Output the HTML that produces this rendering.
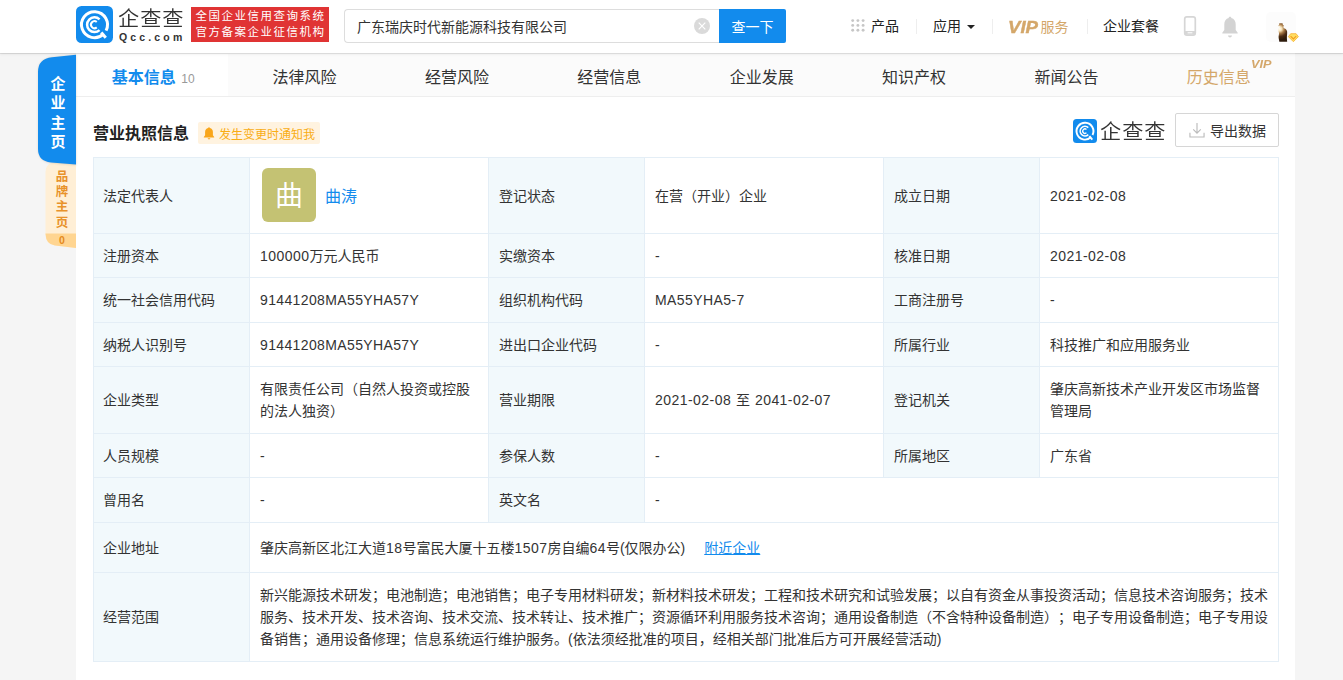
<!DOCTYPE html>
<html lang="zh-CN">
<head>
<meta charset="utf-8">
<title>广东瑞庆时代新能源科技有限公司 - 企查查</title>
<style>
*{box-sizing:border-box;margin:0;padding:0}
html,body{width:1343px;height:680px;overflow:hidden}
body{text-spacing-trim:space-all;background:#f5f5f5;font-family:"Liberation Sans","Noto Sans CJK SC",sans-serif;font-size:14px;color:#333;position:relative}
a{text-decoration:none;color:#128bed}
.abs{position:absolute}
/* header */
#hd{position:absolute;left:0;top:0;width:1343px;height:53px;background:#fff;box-shadow:0 1px 0 rgba(0,0,0,.09),0 1px 3px rgba(0,0,0,.09);z-index:5}
#logo-ic{position:absolute;left:76px;top:6px;width:37px;height:37px}
#logo-cn{position:absolute;left:118.400px;top:4px;font-family:"Noto Sans CJK SC",sans-serif;font-weight:350;font-size:20px;line-height:28px;color:#333;letter-spacing:.9px;white-space:nowrap;transform:scaleX(1.06);transform-origin:0 50%}
#logo-en{position:absolute;left:119px;top:30px;font-family:"Liberation Sans",sans-serif;font-weight:bold;font-size:10.500px;line-height:14px;color:#333;letter-spacing:3.150px;white-space:nowrap}
#redbox{position:absolute;left:191px;top:7px;width:138px;height:35px;background:#e03434;color:#fff;font-size:11.500px;line-height:16.400px;padding:1px 0 0 4.500px;letter-spacing:1.500px;white-space:nowrap}
#search{position:absolute;left:344px;top:9px;width:376px;height:34px;border:1px solid #ddd;border-right:none;border-radius:4px 0 0 4px;background:#fff}
#search span{position:absolute;left:12px;top:1px;line-height:32px;font-size:14px;color:#333;white-space:nowrap}
#clear{position:absolute;left:694px;top:18px;width:16px;height:16px}
#sbtn{position:absolute;left:719px;top:9px;width:67px;height:34px;background:#128bed;color:#fff;font-size:14px;line-height:36px;text-align:center;border-radius:0 2px 2px 0}
.nav{position:absolute;top:15px;line-height:22px;font-size:14px;color:#222;white-space:nowrap}
.sep{position:absolute;top:19px;width:1px;height:15px;background:#eee}
/* main */
#main{position:absolute;left:76px;top:53px;width:1219px;height:627px;background:#fff}
#tabs{position:absolute;left:0;top:1px;width:1219px;height:43px;background:#fbfbfb;border-bottom:1px solid #eee;display:flex}
#tabs div{flex:1;text-align:center;font-size:16px;line-height:42px;padding-top:3px;color:#333;position:relative;white-space:nowrap}
#tabs div.on{background:#fff;color:#128bed;font-weight:bold;text-indent:2px}
#tabs div.on small{font-weight:normal;font-size:12px;color:#999;margin-left:1px}
#tabs div.vip{color:#d4a76a}
#tabs div.vip i{position:absolute;left:108px;top:-11.500px;font-size:11px;transform:scaleX(1.15);transform-origin:0 50%;font-weight:bold;font-style:italic;font-family:"Liberation Sans",sans-serif}
/* side */
#side1{position:absolute;left:36px;top:53px;width:42px;height:114px;z-index:2}
#side2{position:absolute;left:43px;top:160px;width:35px;height:90px}
.sidetxt{z-index:3;position:absolute;text-align:center;font-weight:bold;white-space:nowrap}
/* section */
#ttl{position:absolute;left:17px;top:69px;font-size:16px;font-weight:bold;line-height:24px;color:#222}
#badge{position:absolute;left:122px;top:69px;width:122px;height:22px;background:#fff3e0;border-radius:2px;color:#f9ad14;font-size:12px;line-height:22px;white-space:nowrap}
#badge span{position:absolute;left:21px;top:1.500px}
#badge svg{position:absolute;left:5px;top:5px}
#wm-ic{position:absolute;left:997px;top:66px;width:24px;height:24px}
#wm-tx{position:absolute;left:1024.400px;top:63px;font-family:"Noto Sans CJK SC",sans-serif;font-weight:350;font-size:20px;letter-spacing:.9px;line-height:30px;transform:scaleX(1.06);transform-origin:0 50%;color:#333;white-space:nowrap}
#exp{position:absolute;left:1099px;top:60px;width:104px;height:34px;border:1px solid #d6d6d6;border-radius:2px;background:#fff;font-size:14px;line-height:32px;color:#333}
#exp span{position:absolute;left:34px;top:1px;white-space:nowrap}
#exp svg{position:absolute;left:13px;top:7.500px}
/* table */
table{position:absolute;left:17px;top:104px;width:1185px;border-collapse:collapse;table-layout:fixed;font-size:14px;line-height:22px;color:#333}
td{border:1px solid #e4eef6;padding:0 10px;vertical-align:middle;background:#fff;overflow:hidden}
td.l{background:#f2f9fc}
td.l:first-child{padding-left:9px}
.n{letter-spacing:.45px}
.av{display:inline-block;width:54px;height:54px;border-radius:6px;background:#c4c273;color:#fff;font-size:28px;line-height:57px;text-align:center;vertical-align:middle;margin-left:2px;position:relative;top:-1px}
.nm{font-size:16px;vertical-align:middle;margin-left:9px;position:relative;top:1px}
</style>
</head>
<body>
<div id="hd">
  <svg id="logo-ic" viewBox="0 0 37 37"><rect width="37" height="37" rx="5.500" fill="#128bed"/><g fill="none" stroke="#fff"><path d="M27.37 28.21A13 13 0 1 1 30.08 24.60" stroke-width="3"/><path d="M23.55 24.11A7.400 7.400 0 1 1 23.55 13.29" stroke-width="2.500"/><path d="M20.75 21.38A3.500 3.500 0 1 1 20.75 16.02" stroke-width="2"/><path d="M25.26 26.47L29.78 31.68" stroke-width="3"/></g></svg>
  <div id="logo-cn">企查查</div>
  <div id="logo-en">Qcc.com</div>
  <div id="redbox">全国企业信用查询系统<br>官方备案企业征信机构</div>
  <div id="search"><span>广东瑞庆时代新能源科技有限公司</span></div>
  <svg id="clear" viewBox="0 0 16 16"><circle cx="8" cy="8" r="8" fill="#dadada"/><path d="M4.700 4.700l6.600 6.600M11.300 4.700l-6.600 6.600" stroke="#fff" stroke-width="1.200"/></svg>
  <div id="sbtn">查一下</div>
  <svg class="abs" style="left:851px;top:19px" width="14" height="13" viewBox="0 0 14 13"><g fill="#c6c6c6"><circle cx="1.7" cy="1.6" r="1.450"/><circle cx="6.9" cy="1.6" r="1.450"/><circle cx="12.1" cy="1.6" r="1.450"/><circle cx="1.7" cy="6.4" r="1.450"/><circle cx="6.9" cy="6.4" r="1.450"/><circle cx="12.1" cy="6.4" r="1.450"/><circle cx="1.7" cy="11.2" r="1.450"/><circle cx="6.9" cy="11.2" r="1.450"/><circle cx="12.1" cy="11.2" r="1.450"/></g></svg>
  <div class="nav" style="left:871px">产品</div>
  <div class="sep" style="left:916px"></div>
  <div class="nav" style="left:933px">应用</div>
  <svg class="abs" style="left:967px;top:25px" width="8" height="4" viewBox="0 0 8 4"><path d="M0 0h8L4 4z" fill="#222"/></svg>
  <div class="sep" style="left:992px"></div>
  <div class="nav" style="left:1008px;top:16px;color:#d4a76a"><b style="display:inline-block;font-family:'Liberation Sans',sans-serif;font-style:italic;font-size:16.500px;-webkit-text-stroke:.4px #d4a76a;transform:scaleX(1.13);transform-origin:0 50%;vertical-align:-1px">VIP</b><span style="margin-left:6px">服务</span></div>
  <div class="sep" style="left:1087px"></div>
  <div class="nav" style="left:1103px">企业套餐</div>
  <svg class="abs" style="left:1183px;top:16px" width="14" height="20" viewBox="0 0 14 20"><rect x="1.700" y=".9" width="10.600" height="18.200" rx="2.200" fill="none" stroke="#d6d6d6" stroke-width="1.700"/><rect x="1.700" y="15" width="10.600" height="3.600" fill="#d6d6d6"/><rect x="4.600" y="16.300" width="4.800" height="1" fill="#fff"/></svg>
  <svg class="abs" style="left:1221px;top:15.500px" width="18" height="23" viewBox="0 0 18 22" preserveAspectRatio="none"><path d="M9 .8c.8 0 1.3.5 1.3 1.2 2.8.7 4.4 3 4.4 6v5.4l2 2.6v.8H1.300v-.8l2-2.600V8c0-3 1.600-5.300 4.400-6C7.700 1.300 8.200.8 9 .8z" fill="#d3d3d3"/><path d="M7 18.700h4c0 1.100-.9 1.800-2 1.800s-2-.7-2-1.800z" fill="#d3d3d3"/></svg>
  <div class="abs" style="left:1266px;top:12px;width:30px;height:30px;border-radius:5px;background:#fcfcfc"></div>
  <svg class="abs" style="left:1274px;top:22px" width="26" height="21" viewBox="0 0 26 21"><defs><filter id="fb" x="-30%" y="-30%" width="160%" height="160%"><feGaussianBlur stdDeviation=".45"/></filter><radialGradient id="fg" gradientUnits="userSpaceOnUse" cx="5.600" cy="6.800" r="11"><stop offset="0" stop-color="#fffef8"/><stop offset=".2" stop-color="#f6e2b8"/><stop offset=".42" stop-color="#a87a47"/><stop offset=".7" stop-color="#4e2e14"/><stop offset="1" stop-color="#2e1b0b"/></radialGradient><clipPath id="fc"><rect x="0" y="0" width="26" height="19.700"/></clipPath></defs><g clip-path="url(#fc)"><path filter="url(#fb)" d="M5.300 1.200h3.200l.5 2 1 .3v.8H9.200c.1.900.3 1.500.9 1.900 1.700.7 2.800 1.600 3 3.300.2 2-.1 3.600-.2 5.300-.1 1.700.2 3.300.3 5.700H5.400c-.1-2-.7-3.400-.8-5.200-.1-1.600.5-2.600.4-4.100-.1-1.300-.6-2-.6-3.300 0-1.200.5-2 1.300-2.600.2-.4.200-.7.100-1H4.200v-.8l.8-.3z" fill="url(#fg)"/></g><path d="M16.700 11.700h5.400l2.300 3-5 5-5-5z" fill="#fede62" stroke="#f7ae2e" stroke-width=".8" stroke-linejoin="round"/><path d="M16.600 14.200l2.800 2.700 2.800-2.700" fill="none" stroke="#f39a1e" stroke-width="1.100"/></svg>
</div>

<svg id="side1" viewBox="0 0 42 114"><defs><filter id="sh" x="-20%" y="-10%" width="140%" height="120%"><feGaussianBlur stdDeviation="1.2"/></filter></defs><path d="M40 2.200L16 4.400Q2.500 5.800 2.500 19V96Q2.500 108.300 15 109.700L40 112.100z" fill="rgba(120,90,60,.25)" filter="url(#sh)"/><path d="M40 1.800L16 4.200Q2 5.600 2 19V96Q2 108.100 15 109.400L40 111.600z" fill="#128bed"/></svg>
<div class="sidetxt" style="left:39px;top:74px;width:38px;font-size:15px;line-height:19.400px;color:#fff">企<br>业<br>主<br>页</div>
<svg id="side2" viewBox="0 0 35 90"><path d="M33 3.500L12 2.500Q2.500 3 2.500 12V74Q2.500 84.500 12 85.500L33 88z" fill="#ffefd6"/><path d="M2.500 73.500H33V88L12 85.500Q3 84.500 2.500 74z" fill="#ffd591"/></svg>
<div class="sidetxt" style="left:46.500px;top:170px;width:31px;font-size:12.500px;line-height:15.200px;color:#e8922a">品<br>牌<br>主<br>页</div>
<div class="sidetxt" style="left:46.500px;top:233px;width:31px;font-size:10.500px;line-height:14px;color:#e58a1c;font-family:'Liberation Sans',sans-serif">0</div>

<div id="main">
  <div id="tabs">
    <div class="on">基本信息 <small>10</small></div>
    <div>法律风险</div>
    <div>经营风险</div>
    <div>经营信息</div>
    <div>企业发展</div>
    <div>知识产权</div>
    <div>新闻公告</div>
    <div class="vip">历史信息<i>VIP</i></div>
  </div>
  <div id="ttl">营业执照信息</div>
  <div id="badge"><svg width="12" height="13" viewBox="0 0 12 13"><path d="M6 .3c.5 0 .9.300.9.800 1.900.5 3 2 3 4v3.200l1.300 1.700v.5H.8v-.5l1.300-1.700V5.100c0-2 1.100-3.500 3-4C5.100.6 5.500.3 6 .3z" fill="#f9a61a"/><path d="M4.700 11.300h2.600c0 .7-.6 1.200-1.300 1.200s-1.300-.5-1.300-1.200z" fill="#f9a61a"/></svg><span>发生变更时通知我</span></div>
  <svg id="wm-ic" viewBox="0 0 37 37"><rect width="37" height="37" rx="5.500" fill="#128bed"/><g fill="none" stroke="#fff"><path d="M27.37 28.21A13 13 0 1 1 30.08 24.60" stroke-width="3"/><path d="M23.55 24.11A7.400 7.400 0 1 1 23.55 13.29" stroke-width="2.500"/><path d="M20.75 21.38A3.500 3.500 0 1 1 20.75 16.02" stroke-width="2"/><path d="M25.26 26.47L29.78 31.68" stroke-width="3"/></g></svg>
  <div id="wm-tx">企查查</div>
  <div id="exp"><svg width="16" height="16" viewBox="0 0 17 17"><path d="M8.500 1v10.500M4.500 7.800l4 4 4-4M1 11.500V16h15v-4.500" fill="none" stroke="#bbb" stroke-width="1.200"/></svg><span>导出数据</span></div>

  <table>
    <colgroup><col style="width:156px"><col style="width:239px"><col style="width:156px"><col style="width:239px"><col style="width:156px"><col style="width:239px"></colgroup>
    <tr style="height:76px"><td class="l">法定代表人</td><td><span class="av">曲</span><a class="nm">曲涛</a></td><td class="l">登记状态</td><td>在营（开业）企业</td><td class="l">成立日期</td><td><span class="n">2021-02-08</span></td></tr>
    <tr style="height:44px"><td class="l">注册资本</td><td><span class="n">100000</span>万元人民币</td><td class="l">实缴资本</td><td>-</td><td class="l">核准日期</td><td><span class="n">2021-02-08</span></td></tr>
    <tr style="height:45px"><td class="l">统一社会信用代码</td><td><span class="n" style="letter-spacing:.37px">91441208MA55YHA57Y</span></td><td class="l">组织机构代码</td><td><span class="n" style="letter-spacing:.4px">MA55YHA5-7</span></td><td class="l">工商注册号</td><td>-</td></tr>
    <tr style="height:44px"><td class="l">纳税人识别号</td><td><span class="n" style="letter-spacing:.37px">91441208MA55YHA57Y</span></td><td class="l">进出口企业代码</td><td>-</td><td class="l">所属行业</td><td>科技推广和应用服务业</td></tr>
    <tr style="height:67px"><td class="l">企业类型</td><td>有限责任公司（自然人投资或控股的法人独资）</td><td class="l">营业期限</td><td><span class="n">2021-02-08</span><span style="word-spacing:1px"> 至 </span><span class="n">2041-02-07</span></td><td class="l">登记机关</td><td>肇庆高新技术产业开发区市场监督管理局</td></tr>
    <tr style="height:44px"><td class="l">人员规模</td><td>-</td><td class="l">参保人数</td><td>-</td><td class="l">所属地区</td><td>广东省</td></tr>
    <tr style="height:45px"><td class="l">曾用名</td><td>-</td><td class="l">英文名</td><td colspan="3">-</td></tr>
    <tr style="height:50px"><td class="l">企业地址</td><td colspan="5">肇庆高新区北江大道<span class="n">18</span>号富民大厦十五楼<span class="n">1507</span>房自编<span class="n">64</span>号(仅限办公)<a style="margin-left:19px;text-decoration:underline">附近企业</a></td></tr>
    <tr style="height:89px"><td class="l">经营范围</td><td colspan="5">新兴能源技术研发；电池制造；电池销售；电子专用材料研发；新材料技术研发；工程和技术研究和试验发展；以自有资金从事投资活动；信息技术咨询服务；技术服务、技术开发、技术咨询、技术交流、技术转让、技术推广；资源循环利用服务技术咨询；通用设备制造（不含特种设备制造）；电子专用设备制造；电子专用设备销售；通用设备修理；信息系统运行维护服务。(依法须经批准的项目，经相关部门批准后方可开展经营活动)</td></tr>
  </table>
</div>
</body>
</html>
